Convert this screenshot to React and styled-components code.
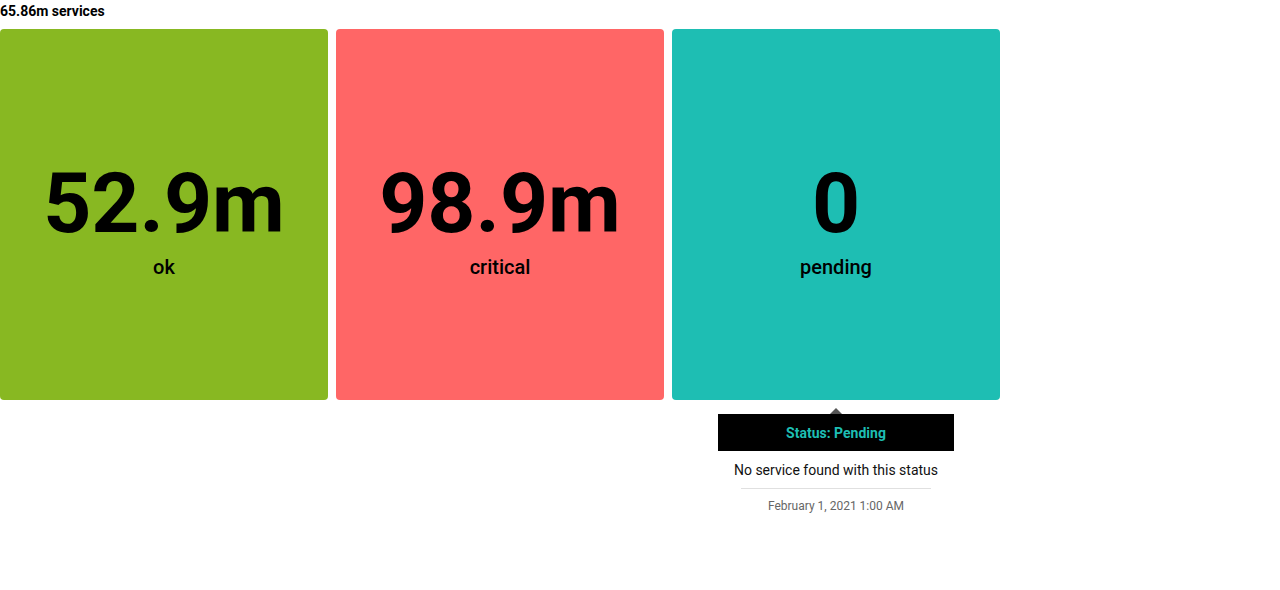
import React from "react";
import styled, { createGlobalStyle } from "styled-components";

const Global = createGlobalStyle`
  html, body { margin: 0; padding: 0; background: #fff; }
  body { font-family: Roboto, "Liberation Sans", sans-serif; color: #000; }
`;

const Page = styled.div`
  width: 1280px;
  height: 590px;
  display: flex;
  flex-direction: column;
`;

const Title = styled.div`
  font-size: 14px;
  font-weight: 700;
  line-height: 16px;
  padding-top: 3px;
  height: 29px;
  box-sizing: border-box;
`;

const Grid = styled.div`
  display: grid;
  grid-template-columns: repeat(3, 328px);
  column-gap: 8px;
`;

const Cell = styled.div`
  display: flex;
  flex-direction: column;
  align-items: center;
`;

const Tile = styled.div`
  width: 328px;
  height: 371px;
  border-radius: 4px;
  background: ${(p) => p.$bg};
  display: flex;
  flex-direction: column;
  align-items: center;
  justify-content: flex-start;
  box-sizing: border-box;
  padding-top: 133px;
`;

const Value = styled.div`
  font-size: 84px;
  font-weight: 700;
  line-height: 84px;
`;

const Label = styled.div`
  font-size: 20px;
  font-weight: 500;
  line-height: 24px;
  margin-top: 9px;
`;

const Tooltip = styled.div`
  position: relative;
  margin-top: 14px;
  width: 236px;
  background: #fff;
  display: flex;
  flex-direction: column;
  align-items: center;
`;

const Arrow = styled.div`
  position: absolute;
  top: -6px;
  left: 50%;
  transform: translateX(-50%);
  width: 0;
  height: 0;
  border-left: 6px solid transparent;
  border-right: 6px solid transparent;
  border-bottom: 6px solid #555;
`;

const TipHeader = styled.div`
  width: 100%;
  height: 37px;
  background: #000;
  color: ${(p) => p.$color};
  font-size: 14px;
  font-weight: 700;
  display: flex;
  align-items: center;
  justify-content: center;
`;

const TipBody = styled.div`
  font-size: 14px;
  line-height: 16px;
  color: #111;
  margin-top: 11px;
`;

const Divider = styled.div`
  width: 190px;
  height: 1px;
  background: #e0e0e0;
  margin-top: 10px;
`;

const TipDate = styled.div`
  font-size: 12px;
  line-height: 14px;
  color: #666;
  margin-top: 10px;
`;

const tiles = [
  { value: "52.9m", label: "ok", bg: "#88b822" },
  { value: "98.9m", label: "critical", bg: "#ff6666" },
  { value: "0", label: "pending", bg: "#1ebeb3", tip: true },
];

export default function App() {
  return (
    <Page>
      <Global />
      <Title>65.86m services</Title>
      <Grid>
        {tiles.map((t) => (
          <Cell key={t.label}>
            <Tile $bg={t.bg}>
              <Value>{t.value}</Value>
              <Label>{t.label}</Label>
            </Tile>
            {t.tip && (
              <Tooltip>
                <Arrow />
                <TipHeader $color="#1ebeb3">Status: Pending</TipHeader>
                <TipBody>No service found with this status</TipBody>
                <Divider />
                <TipDate>February 1, 2021 1:00 AM</TipDate>
              </Tooltip>
            )}
          </Cell>
        ))}
      </Grid>
    </Page>
  );
}
